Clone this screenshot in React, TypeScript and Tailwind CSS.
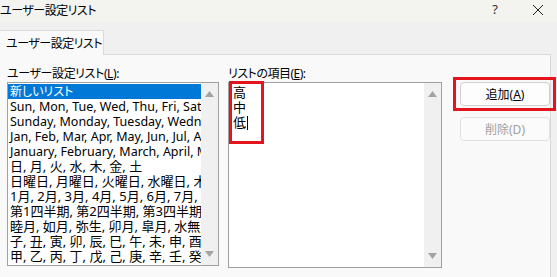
import React from "react";

const rows: [string, boolean][] = [
  ["新しいリスト", false],
  ["Sun, Mon, Tue, Wed, Thu, Fri, Sat", false],
  ["Sunday, Monday, Tuesday, Wednesday, Thursday, Friday, Saturday", false],
  ["Jan, Feb, Mar, Apr, May, Jun, Jul, Aug, Sep, Oct, Nov, Dec", false],
  ["January, February, March, April, May, June, July, August, September, October, November, December", false],
  ["日, 月, 火, 水, 木, 金, 土", true],
  ["日曜日, 月曜日, 火曜日, 水曜日, 木曜日, 金曜日, 土曜日", true],
  ["1月, 2月, 3月, 4月, 5月, 6月, 7月, 8月, 9月, 10月, 11月, 12月", true],
  ["第1四半期, 第2四半期, 第3四半期, 第4四半期", true],
  ["睦月, 如月, 弥生, 卯月, 皐月, 水無月, 文月, 葉月, 長月, 神無月, 霜月, 師走", true],
  ["子, 丑, 寅, 卯, 辰, 巳, 午, 未, 申, 酉, 戌, 亥", true],
  ["甲, 乙, 丙, 丁, 戊, 己, 庚, 辛, 壬, 癸", true],
];

function ScrollBar() {
  return (
    <div className="w-[17px] shrink-0 bg-[#f0f0f0] flex flex-col justify-between items-center py-[8px]">
      <svg width="9" height="6" viewBox="0 0 9 6">
        <polygon points="0,6 9,6 4.5,0" fill="#a3a3a3" />
      </svg>
      <svg width="9" height="6" viewBox="0 0 9 6">
        <polygon points="0,0 9,0 4.5,6" fill="#a3a3a3" />
      </svg>
    </div>
  );
}

export default function App() {
  return (
    <div
      className="w-[557px] h-[277px] bg-[#f0f0f0] overflow-hidden flex flex-col text-[12px] text-black [font-feature-settings:'palt'] relative"
      style={{ fontFamily: '"Noto Sans", "Noto Sans CJK JP", sans-serif' }}
    >
      {/* title bar */}
      <div className="h-[22px] shrink-0 bg-[#f3f3ef] flex items-center justify-between">
        <span className="leading-[15px] -mt-[2px] tracking-[-0.5px] whitespace-nowrap">ユーザー設定リスト</span>
        <div className="flex items-center gap-[34px] pr-[13px] -mt-[3px]">
          <span className="text-[13px] text-[#333]">?</span>
          <svg width="12" height="12" viewBox="0 0 12 12">
            <path d="M1 1 L11 11 M11 1 L1 11" stroke="#222" strokeWidth="1" />
          </svg>
        </div>
      </div>

      {/* tab strip */}
      <div className="mt-[8px] flex">
        <div className="w-[104px] h-[25px] bg-[#f9f9f9] border border-b-0 border-[#d9d9d9] border-l-0 flex items-center pl-[6px] -mb-px relative z-10">
          <span className="leading-[15px] tracking-[-0.5px] whitespace-nowrap">ユーザー設定リスト</span>
        </div>
      </div>

      {/* tab panel */}
      <div className="w-[551px] flex-1 bg-[#f9f9f9] border-t border-r border-[#d9d9d9] flex pl-[7px] pt-[11px] gap-[9px]">
        {/* left column */}
        <div className="w-[212px] flex flex-col">
          <div className="h-[16px] leading-[15px] tracking-[-0.4px] whitespace-nowrap">
            ユーザー設定リスト(<span className="underline">L</span>):
          </div>
          <div className="h-[184px] border border-[#a0a0a0] bg-white flex">
            <div className="flex-1 min-w-0 overflow-hidden pt-[1px]">
              {rows.map(([r, big], i) => (
                <div
                  key={i}
                  className={
                    "h-[15px] leading-[15px] whitespace-nowrap pl-[2px] " +
                    (big ? "text-[13px] " : i === 0 ? "" : "text-[12.5px] ") +
                    (i === 0 ? "bg-[#0078d7] text-white" : "")
                  }
                >
                  {r}
                </div>
              ))}
            </div>
            <ScrollBar />
          </div>
        </div>

        {/* right column */}
        <div className="w-[218px] flex flex-col relative">
          <div className="h-[16px] leading-[15px] tracking-[-0.5px] whitespace-nowrap">
            リストの項目(<span className="underline">E</span>):
          </div>
          <div className="h-[186px] border border-[#a0a0a0] bg-white flex">
            <div className="flex-1 pl-[4px] pt-[2px] text-[13px]">
              <div className="h-[15px] leading-[15px]">高</div>
              <div className="h-[15px] leading-[15px]">中</div>
              <div className="h-[15px] leading-[15px] flex items-center">
                低<span className="inline-block w-px h-[14px] bg-black ml-[1px]" />
              </div>
            </div>
            <ScrollBar />
          </div>
          <div className="absolute left-[1px] top-[15px] w-[35px] h-[63px] border-[3px] border-[#e3141b] pointer-events-none" />
        </div>

        {/* buttons */}
        <div className="flex flex-col pt-[16px] pl-[9px] relative">
          <div className="w-[90px] h-[24px] border border-[#d0d0d0] rounded-[4px] bg-[#fdfdfd] flex items-center justify-center leading-[15px] whitespace-nowrap">
            追加(<span className="underline">A</span>)
          </div>
          <div className="mt-[11px] w-[90px] h-[24px] border border-[#e0e0e0] rounded-[4px] bg-[#fbfbfb] flex items-center justify-center leading-[15px] text-[#a0a0a0] whitespace-nowrap">
            削除(D)
          </div>
          <div className="absolute left-[2px] top-[11px] w-[103px] h-[34px] border-[3px] border-[#e3141b] pointer-events-none" />
        </div>
      </div>
    </div>
  );
}
